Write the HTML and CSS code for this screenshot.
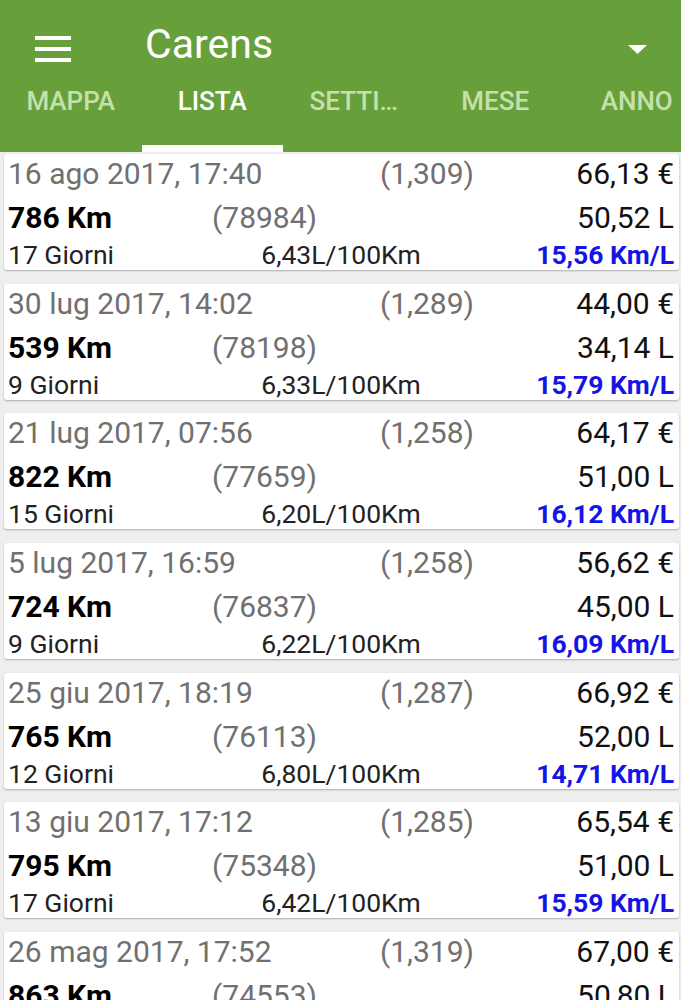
FILE: index.html
```html
<!DOCTYPE html>
<html lang="it">
<head>
<meta charset="utf-8">
<title>Carens</title>
<link rel="stylesheet" href="styles.css">
</head>
<body>
<header class="appbar">
  <div class="toolbar">
    <div class="menu" aria-label="menu"><span></span><span></span><span></span></div>
    <div class="title">Carens</div>
    <div class="spacer"></div>
    <svg class="drop" width="19" height="9" viewBox="0 0 19 9"><polygon points="0,0 19,0 9.5,9" fill="#fff"/></svg>
  </div>
  <nav class="tabs">
    <div class="tab">MAPPA</div>
    <div class="tab active">LISTA</div>
    <div class="tab">SETTI…</div>
    <div class="tab">MESE</div>
    <div class="tab">ANNO</div>
  </nav>
</header>
<main class="list">
  <div class="card">
    <div class="r1"><span class="date">16 ago 2017, 17:40</span><span class="muted">(1,309)</span><span class="right">66,13 €</span></div>
    <div class="r2"><span class="km">786 Km</span><span class="muted">(78984)</span><span class="right">50,52 L</span></div>
    <div class="r3"><span>17 Giorni</span><span class="mid">6,43L/100Km</span><span class="eff">15,56 Km/L</span></div>
  </div>
  <div class="card">
    <div class="r1"><span class="date">30 lug 2017, 14:02</span><span class="muted">(1,289)</span><span class="right">44,00 €</span></div>
    <div class="r2"><span class="km">539 Km</span><span class="muted">(78198)</span><span class="right">34,14 L</span></div>
    <div class="r3"><span>9 Giorni</span><span class="mid">6,33L/100Km</span><span class="eff">15,79 Km/L</span></div>
  </div>
  <div class="card">
    <div class="r1"><span class="date">21 lug 2017, 07:56</span><span class="muted">(1,258)</span><span class="right">64,17 €</span></div>
    <div class="r2"><span class="km">822 Km</span><span class="muted">(77659)</span><span class="right">51,00 L</span></div>
    <div class="r3"><span>15 Giorni</span><span class="mid">6,20L/100Km</span><span class="eff">16,12 Km/L</span></div>
  </div>
  <div class="card">
    <div class="r1"><span class="date">5 lug 2017, 16:59</span><span class="muted">(1,258)</span><span class="right">56,62 €</span></div>
    <div class="r2"><span class="km">724 Km</span><span class="muted">(76837)</span><span class="right">45,00 L</span></div>
    <div class="r3"><span>9 Giorni</span><span class="mid">6,22L/100Km</span><span class="eff">16,09 Km/L</span></div>
  </div>
  <div class="card">
    <div class="r1"><span class="date">25 giu 2017, 18:19</span><span class="muted">(1,287)</span><span class="right">66,92 €</span></div>
    <div class="r2"><span class="km">765 Km</span><span class="muted">(76113)</span><span class="right">52,00 L</span></div>
    <div class="r3"><span>12 Giorni</span><span class="mid">6,80L/100Km</span><span class="eff">14,71 Km/L</span></div>
  </div>
  <div class="card">
    <div class="r1"><span class="date">13 giu 2017, 17:12</span><span class="muted">(1,285)</span><span class="right">65,54 €</span></div>
    <div class="r2"><span class="km">795 Km</span><span class="muted">(75348)</span><span class="right">51,00 L</span></div>
    <div class="r3"><span>17 Giorni</span><span class="mid">6,42L/100Km</span><span class="eff">15,59 Km/L</span></div>
  </div>
  <div class="card">
    <div class="r1"><span class="date">26 mag 2017, 17:52</span><span class="muted">(1,319)</span><span class="right">67,00 €</span></div>
    <div class="r2"><span class="km">863 Km</span><span class="muted">(74553)</span><span class="right">50,80 L</span></div>
  </div>
</main>
</body>
</html>
```
FILE: styles.css
```css
* { box-sizing: border-box; }
html, body { margin: 0; padding: 0; }
body {
  width: 681px;
  height: 1000px;
  overflow: hidden;
  background: #eeeeee;
  font-family: Roboto, "Liberation Sans", sans-serif;
}
.appbar {
  background: #67a03a;
  height: 152px;
  overflow: hidden;
}
.toolbar {
  height: 78px;
  padding: 20px 34px 0 35px;
  display: flex;
  align-items: center;
}
.toolbar .menu {
  width: 36px;
  height: 26px;
  display: flex;
  flex-direction: column;
  justify-content: space-between;
}
.toolbar .menu span {
  display: block;
  height: 4px;
  background: #fff;
}
.toolbar .title {
  margin-left: 74px;
  margin-bottom: 10px;
  color: #fff;
  font-size: 41px;
  line-height: 44px;
}
.toolbar .spacer { flex: 1; }
.toolbar .drop { display: block; margin-top: 1px; }
.tabs {
  display: flex;
  height: 74px;
}
.tab {
  flex: 0 0 141.5px;
  height: 74px;
  line-height: 47px;
  text-align: center;
  font-size: 26px;
  font-weight: 500;
  color: #c6e0ad;
  border-bottom: 7px solid transparent;
  white-space: nowrap;
}
.tab.active {
  color: #fff;
  border-bottom-color: #fff;
}
.list {
  padding-top: 2px;
}
.card {
  height: 116px;
  margin: 0 2px 13.67px 4px;
  padding: 0 5px 0 4px;
  background: #fff;
  border-radius: 3px;
  box-shadow: 0 1px 2px rgba(0,0,0,0.28);
}
.r1, .r2, .r3 {
  display: grid;
  align-items: center;
  white-space: nowrap;
}
.r1 > span, .r2 > span, .r3 > span { line-height: 1; }
.r1 {
  grid-template-columns: 1fr auto 200px;
  height: 40px;
  font-size: 30px;
  color: #111;
}
.r2 {
  grid-template-columns: 204px 1fr auto;
  height: 48px;
  font-size: 30px;
  color: #111;
}
.r3 {
  grid-template-columns: 1fr auto 1fr;
  height: 25px;
  font-size: 26.5px;
  color: #222;
}
.date, .muted { color: #707070; }
.right { text-align: right; }
.km { font-weight: 700; color: #000; }
.mid { text-align: center; }
.eff {
  text-align: right;
  font-weight: 700;
  color: #1414e6;
}
```
